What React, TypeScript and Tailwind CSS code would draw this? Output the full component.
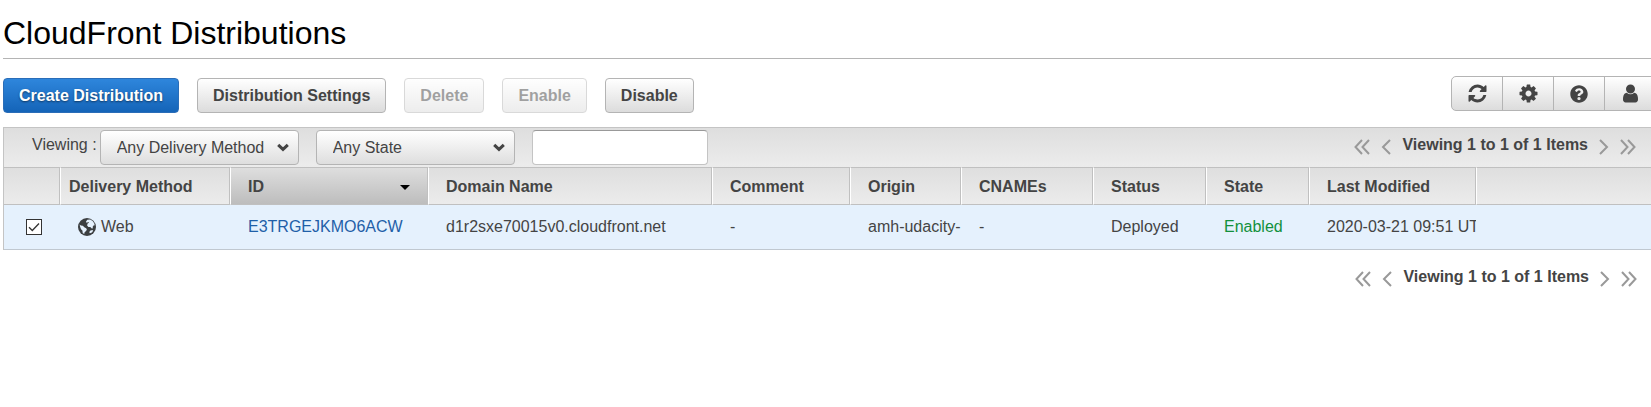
import type { ReactNode } from "react";
import clsx from "clsx";
import { FaQuestionCircle } from "react-icons/fa";

function Glyph({ d }: { d: string }) {
  return (
    <svg viewBox="0 0 1792 1792" className="size-[21px] fill-current" aria-hidden="true">
      <path d={d} />
    </svg>
  );
}

const REFRESH =
  "M1639 1056q0 5-1 7-64 268-268 434.5t-478 166.5q-146 0-282.5-55t-243.5-157l-129 129q-19 19-45 19t-45-19-19-45v-448q0-26 19-45t45-19h448q26 0 45 19t19 45-19 45l-137 137q71 66 161 102t187 36q134 0 250-65t186-179q11-17 53-117 8-23 30-23h192q13 0 22.5 9.5t9.5 22.5zm25-800v448q0 26-19 45t-45 19h-448q-26 0-45-19t-19-45 19-45l138-138q-148-137-349-137-134 0-250 65t-186 179q-11 17-53 117-8 23-30 23h-199q-13 0-22.5-9.5t-9.5-22.5v-7q65-268 270-434.5t480-166.5q146 0 284 55.5t245 156.5l130-129q19-19 45-19t45 19 19 45z";
const COG =
  "M1152 896q0-106-75-181t-181-75-181 75-75 181 75 181 181 75 181-75 75-181zm512-109v222q0 12-8 23t-20 13l-185 28q-19 54-39 91 35 50 107 138 10 12 10 25t-9 23q-27 37-99 108t-94 71q-12 0-26-9l-138-108q-44 23-91 38-16 136-29 186-7 28-36 28h-222q-14 0-24.5-8.5t-11.5-21.5l-28-184q-49-16-90-37l-141 107q-10 9-25 9-14 0-25-11-126-114-165-168-7-10-7-23 0-12 8-23 15-21 51-66.5t54-70.5q-27-50-41-99l-183-27q-13-2-21-12.5t-8-23.5v-222q0-12 8-23t19-13l186-28q14-46 39-92-40-57-107-138-10-12-10-24 0-10 9-23 26-36 98.5-107.5t94.5-71.5q13 0 26 10l138 107q44-23 91-38 16-136 29-186 7-28 36-28h222q14 0 24.5 8.5t11.5 21.5l28 184q49 16 90 37l142-107q9-9 24-9 13 0 25 10 129 119 165 170 7 8 7 22 0 12-8 23-15 21-51 66.5t-54 70.5q26 50 41 98l183 28q13 2 21 12.5t8 23.5z";
const USER =
  "M1536 1399q0 109-62.5 187t-150.5 78h-854q-88 0-150.5-78t-62.5-187q0-85 8.5-160.5t31.5-152 58.5-131 94-89 134.5-34.5q131 128 313 128t313-128q76 0 134.5 34.5t94 89 58.5 131 31.5 152 8.5 160.5zm-256-887q0 159-112.5 271.5t-271.5 112.5-271.5-112.5-112.5-271.5 112.5-271.5 271.5-112.5 271.5 112.5 112.5 271.5z";

function Button({ children, primary, disabled }: { children: ReactNode; primary?: boolean; disabled?: boolean }) {
  return (
    <button
      type="button"
      disabled={disabled}
      className={clsx(
        "h-[35px] rounded-[4px] border px-[15px] text-base font-bold whitespace-nowrap",
        primary
          ? "border-[#2a6db8] bg-linear-to-b from-[#2e86dc] to-[#1464b8] text-white text-shadow-[0_1px_2px_#00000080]"
          : "border-[#b4b4b4] bg-linear-to-b from-white to-[#dcdcdc] text-[#444]",
        disabled && "opacity-50",
      )}
    >
      {children}
    </button>
  );
}

function Filter({ label, options }: { label: string; options: string[] }) {
  return (
    <span className="grid w-[199px] items-center">
      <select
        aria-label={label}
        className="col-start-1 row-start-1 h-[35px] w-full appearance-none rounded-[4px] border border-[#b4b4b4] bg-linear-to-b from-white to-[#dedede] px-4 text-base text-[#444]"
      >
        {options.map((o) => (
          <option key={o}>{o}</option>
        ))}
      </select>
      <svg
        viewBox="0 0 12 9"
        className="pointer-events-none col-start-1 row-start-1 mr-[10px] h-[9px] w-3 justify-self-end"
        fill="none"
        stroke="#444"
        strokeWidth="3"
        aria-hidden="true"
      >
        <path d="M1.2 1.8 6 6.4l4.8-4.6" />
      </svg>
    </span>
  );
}

function Arrow({ label, d, wide }: { label: string; d: string; wide?: boolean }) {
  return (
    <button type="button" aria-label={label} className="pt-1">
      <svg
        viewBox={wide ? "0 0 16 16" : "0 0 10 16"}
        className={clsx("h-4", wide ? "w-4" : "w-[10px]")}
        fill="none"
        stroke="#999"
        strokeWidth="2"
        aria-hidden="true"
      >
        <path d={d} />
      </svg>
    </button>
  );
}

function Pager() {
  return (
    <nav aria-label="Pages" className="flex items-center gap-[11px] font-bold whitespace-nowrap">
      <Arrow label="First page" wide d="M8 1 1.5 8 8 15M15 1 8.500 8 15 15" />
      <Arrow label="Previous page" d="M9 1 2 8l7 7" />
      <span>Viewing 1 to 1 of 1 Items</span>
      <Arrow label="Next page" d="M1 1l7 7-7 7" />
      <Arrow label="Last page" wide d="M1 1l6.500 7L1 15M8 1l6.500 7L8 15" />
    </nav>
  );
}

function Globe() {
  return (
    <svg viewBox="0 0 18 18" className="size-[18px]" aria-hidden="true">
      <circle cx="9" cy="9" r="9" fill="#3c3f41" />
      <path
        fill="#e5f1fd"
        d="M9.300 1.700 12.200 1.600 14.600 3l1.600 2.200.5 2-1.200.3-.9 1.400.4 1.300-1.200.2-1.500-1.300-1.900-.2-1.300-1.500.5-1.900 1.400-.8-.7-.8-1.500.9-.9-.7.500-1zM1.600 6.500l1.300.9 1.900.3 1.500 1.600 1.900.9.7 1.500-1.100 1.500-1.200 1.100-.4 1.700-1.500-.9-.3-2.500L3 11.200 2.200 9z"
      />
      <path fill="#e5f1fd" d="M12 12.800l2.300-.8.9.700-1.300 1.800-2 .8-.600-1z" />
    </svg>
  );
}

const COLUMNS = [
  { name: "Delivery Method", width: "w-[170px]" },
  { name: "ID", width: "w-[198px]" },
  { name: "Domain Name", width: "w-[284px]" },
  { name: "Comment", width: "w-[138px]" },
  { name: "Origin", width: "w-[111px]" },
  { name: "CNAMEs", width: "w-[132px]" },
  { name: "Status", width: "w-[113px]" },
  { name: "State", width: "w-[103px]" },
  { name: "Last Modified", width: "w-[167px]" },
];

const TOOLS = [
  { label: "Refresh", icon: <Glyph d={REFRESH} /> },
  { label: "Preferences", icon: <Glyph d={COG} /> },
  { label: "Help", icon: <FaQuestionCircle className="size-[18px]" /> },
  { label: "Account", icon: <Glyph d={USER} /> },
];

export default function App() {
  return (
    <main className="overflow-x-hidden bg-white pl-[3px] font-['Liberation_Sans',Arial,sans-serif] text-base leading-6 text-[#444]">
      <h1 className="border-b border-[#b4b4b4] pt-[13px] pb-[5px] text-[32px] leading-10 text-black">
        CloudFront Distributions
      </h1>

      <div className="flex items-start justify-between pt-[17px] pb-[14px]">
        <div className="flex gap-[18px] pt-[2px]">
          <Button primary>Create Distribution</Button>
          <Button>Distribution Settings</Button>
          <Button disabled>Delete</Button>
          <Button disabled>Enable</Button>
          <Button>Disable</Button>
        </div>
        <div className="-mr-[6px] flex h-[35px] rounded-l-[5px] border border-[#b4b4b4] bg-linear-to-b from-white to-[#dcdcdc] text-[#444]">
          {TOOLS.map((t) => (
            <button
              key={t.label}
              type="button"
              aria-label={t.label}
              className="flex w-[51px] items-center justify-center border-r border-[#b4b4b4]"
            >
              {t.icon}
            </button>
          ))}
        </div>
      </div>

      <div className="flex items-start justify-between border-t border-l border-[#c4c4c4] bg-linear-to-b from-[#dedede] to-[#ececec] pt-[2px] pr-[15px] pb-[2px] pl-7">
        <div className="flex gap-[17px]">
          <div className="flex gap-[3px]">
            <span className="pt-[3px]">Viewing :</span>
            <Filter label="Delivery method" options={["Any Delivery Method", "Web", "RTMP"]} />
          </div>
          <Filter label="State" options={["Any State", "Enabled", "Disabled"]} />
          <input
            type="text"
            aria-label="Search distributions"
            className="h-[35px] w-44 rounded-[4px] border border-[#c4c4c4] border-t-[#999] bg-white px-2"
          />
        </div>
        <div className="pt-[3px]">
          <Pager />
        </div>
      </div>

      <table className="w-full table-fixed border-separate border-spacing-0 border-l border-[#c4c4c4] text-left">
        <thead>
          <tr className="h-[38px] bg-linear-to-b from-[#dedede] to-[#ececec]">
            <th className="w-[56px] border-y border-r border-[#c0c0c0]" aria-label="Selected" />
            {COLUMNS.map((c, i) => (
              <th
                key={c.name}
                scope="col"
                className={clsx(
                  "border-y border-r border-l border-y-[#c0c0c0] border-r-[#c0c0c0] border-l-white pt-[2px] pr-0 pb-0 whitespace-nowrap",
                  c.width,
                  i === 0 ? "pl-2" : "pl-[17px]",
                  c.name === "ID" && "bg-linear-to-b from-[#dedede] to-[#bdbdbd]",
                )}
              >
                {c.name === "ID" ? (
                  <span className="flex items-center justify-between pr-[17px]">
                    ID
                    <svg viewBox="0 0 10 5" className="h-[5px] w-[10px]" aria-hidden="true">
                      <path d="M0 0h10L5 5z" />
                    </svg>
                  </span>
                ) : (
                  c.name
                )}
              </th>
            ))}
            <th className="border-y border-l border-y-[#c0c0c0] border-l-white" aria-label="More" />
          </tr>
        </thead>
        <tbody>
          <tr className="h-[45px] bg-[#e5f1fd] whitespace-nowrap *:overflow-hidden *:border-b *:border-[#c0c8d0] *:p-0">
            <td>
              <span className="ml-[22px] grid size-4">
                <input
                  type="checkbox"
                  defaultChecked
                  aria-label="Select E3TRGEJKMO6ACW"
                  className="peer col-start-1 row-start-1 size-4 appearance-none border border-[#333] bg-white"
                />
                <svg
                  viewBox="0 0 16 16"
                  className="pointer-events-none invisible col-start-1 row-start-1 size-4 peer-checked:visible"
                  fill="none"
                  stroke="#333"
                  strokeWidth="1.3"
                  aria-hidden="true"
                >
                  <path d="M3 8.200 6.300 11.500 13 4.500" />
                </svg>
              </span>
            </td>
            <td>
              <span className="flex items-center gap-[5px] pl-[18px]">
                <Globe />
                Web
              </span>
            </td>
            <td>
              <a href="#distribution" className="pl-[18px] text-[#1f5fa8]">
                E3TRGEJKMO6ACW
              </a>
            </td>
            <td>
              <span className="pl-[18px]">d1r2sxe70015v0.cloudfront.net</span>
            </td>
            <td>
              <span className="pl-[18px]">-</span>
            </td>
            <td>
              <span className="pl-[18px]">amh-udacity-</span>
            </td>
            <td>
              <span className="pl-[18px]">-</span>
            </td>
            <td>
              <span className="pl-[18px]">Deployed</span>
            </td>
            <td>
              <span className="pl-[18px] text-[#12903c]">Enabled</span>
            </td>
            <td>
              <span className="pl-[18px]">2020-03-21 09:51 UTC</span>
            </td>
            <td />
          </tr>
        </tbody>
      </table>

      <div className="flex justify-end pt-[15px] pr-[14px]">
        <Pager />
      </div>
    </main>
  );
}
